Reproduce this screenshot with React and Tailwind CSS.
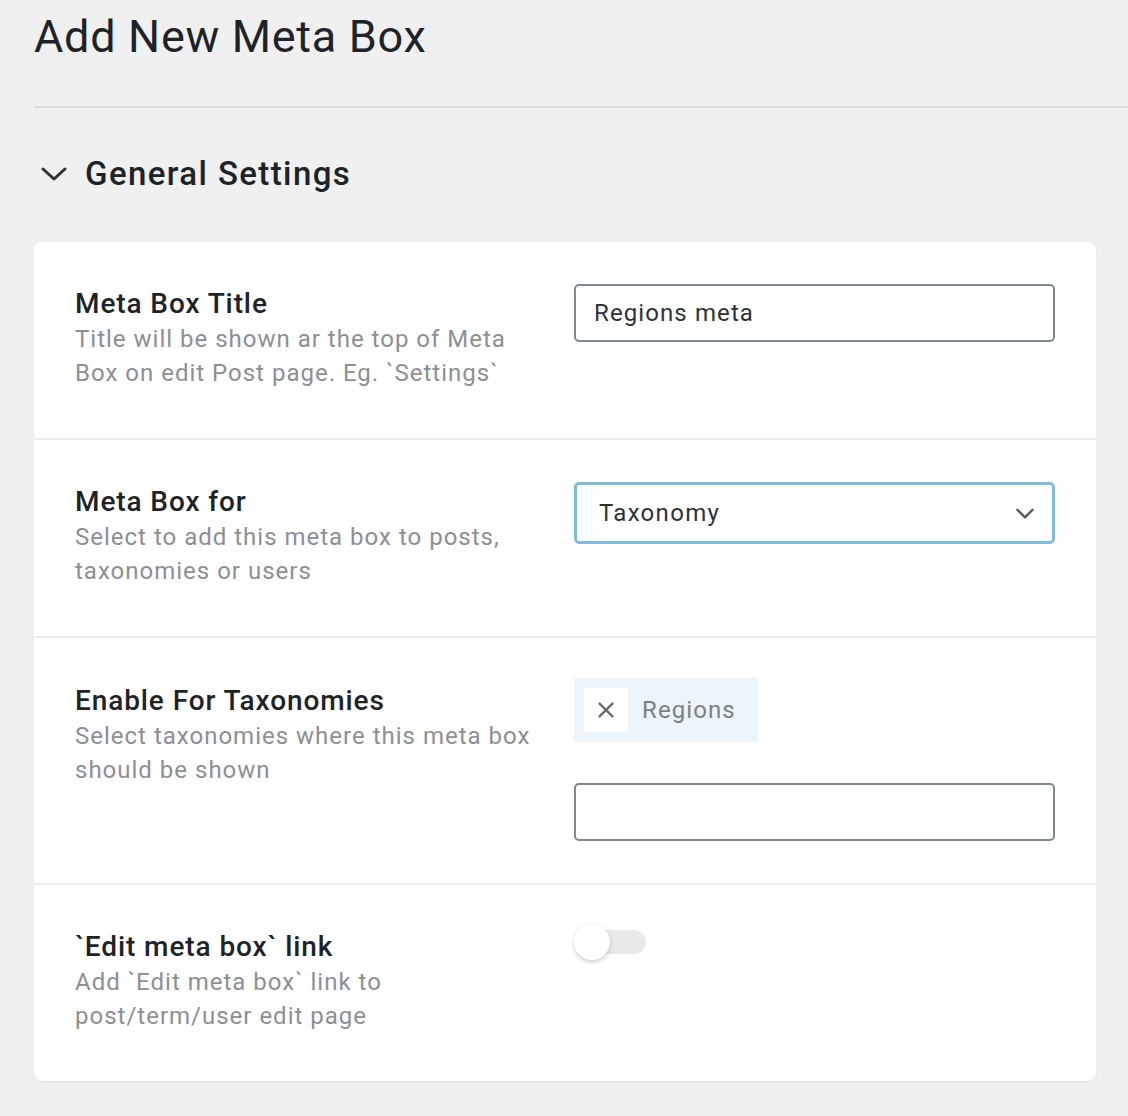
import React from "react";

const FieldRow = ({ label, desc, children, top = "pt-[42px]", lead = "pt-[2px]", last }) => (
  <div className={`flex gap-[35px] px-[41px] ${top} pb-[42px] ${last ? "" : "border-b-2 border-[#ececec]"}`}>
    <div className={`w-[464px] shrink-0 ${lead} pb-[6px]`}>
      <div className="text-[28px] leading-[36px] font-medium tracking-[0.9px] text-[#1d2327]">{label}</div>
      <div className="text-[24px] leading-[34px] tracking-[1px] text-[#8c8f94]">{desc}</div>
    </div>
    <div className="flex-1">{children}</div>
  </div>
);

export default function App() {
  return (
    <div className="min-h-screen bg-[#f0f0f1] pl-[34px] pb-[36px] font-['Roboto',sans-serif]">
      {/* Header */}
      <h1 className="pt-[8px] text-[45px] leading-[58px] font-normal tracking-[0.7px] text-[#1d2327]">Add New Meta Box</h1>
      <div className="mt-[40px] h-[2px] bg-[#dcdcde]"></div>

      {/* Section toggle */}
      <div className="mt-[44px] flex items-center gap-[17px] pl-[6px]">
        <svg width="28" height="16" viewBox="0 0 28 16" fill="none" stroke="#2c3338" strokeWidth="3" strokeLinecap="round" strokeLinejoin="round">
          <path d="M3 3l11 10 11-10" />
        </svg>
        <span className="text-[33px] leading-[44px] font-medium tracking-[1.4px] text-[#1d2327]">General Settings</span>
      </div>

      {/* Settings card */}
      <div className="mt-[46px] mr-[32px] bg-white rounded-[8px] shadow-[0_1px_2px_rgba(0,0,0,0.06)]">
        <FieldRow label="Meta Box Title" desc="Title will be shown ar the top of Meta Box on edit Post page. Eg. `Settings`">
          <div className="h-[58px] rounded-[5px] border-2 border-[#7e8993] flex items-center px-[18px] text-[24px] tracking-[1.1px] text-[#2c3338]">
            Regions meta
          </div>
        </FieldRow>

        <FieldRow label="Meta Box for" desc="Select to add this meta box to posts, taxonomies or users">
          <div className="h-[62px] rounded-[5px] border-[3px] border-[#7fbbdd] flex items-center justify-between pl-[22px] pr-[14px] text-[24px] tracking-[1.3px] text-[#2c3338]">
            <span>Taxonomy</span>
            <svg width="26" height="26" viewBox="0 0 24 24" fill="none" stroke="#50575e" strokeWidth="2.2" strokeLinecap="round" strokeLinejoin="round">
              <path d="M5 9l7 7 7-7" />
            </svg>
          </div>
        </FieldRow>

        <FieldRow label="Enable For Taxonomies" desc="Select taxonomies where this meta box should be shown" top="pt-[40px]" lead="pt-[5px]">
          <div className="inline-flex items-center h-[64px] bg-[#ebf5fb] pl-[10px] pr-[22px] gap-[14px]">
            <span className="w-[44px] h-[44px] bg-white flex items-center justify-center">
              <svg width="22" height="22" viewBox="0 0 24 24" fill="none" stroke="#6d6d6d" strokeWidth="2.6" strokeLinecap="round">
                <path d="M5 5l14 14M19 5L5 19" />
              </svg>
            </span>
            <span className="text-[24px] tracking-[1.1px] text-[#7b7f83]">Regions</span>
          </div>
          <div className="mt-[41px] h-[58px] rounded-[5px] border-2 border-[#7e8993]"></div>
        </FieldRow>

        <FieldRow label="`Edit meta box` link" desc="Add `Edit meta box` link to post/term/user edit page" last>
          <div className="relative w-[74px] h-[36px] -mt-[3px] flex items-center">
            <div className="ml-[16px] w-[56px] h-[24px] rounded-full bg-[#e9e9e9]"></div>
            <div className="absolute left-0 top-0 w-[36px] h-[36px] rounded-full bg-white shadow-[0_2px_4px_rgba(0,0,0,0.2)]"></div>
          </div>
        </FieldRow>
      </div>
    </div>
  );
}
